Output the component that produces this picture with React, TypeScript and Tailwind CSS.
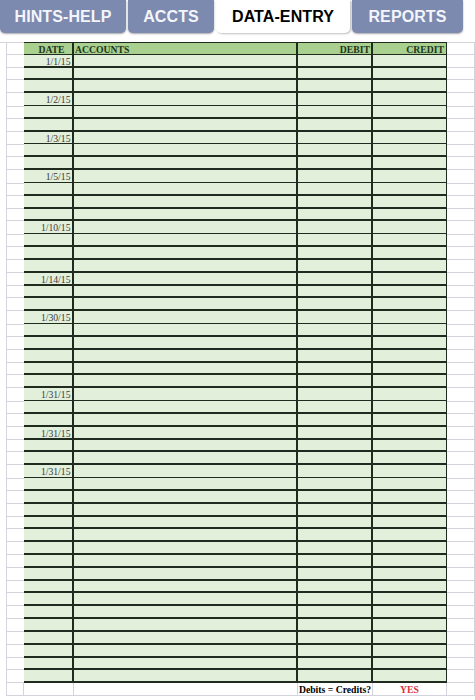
import React from "react";

const COLS = "grid grid-cols-[6px_17.5px_50px_224.5px_75px_74px_28px]";

const dates: Record<number, string> = {
  0: "1/1/15",
  3: "1/2/15",
  6: "1/3/15",
  9: "1/5/15",
  13: "1/10/15",
  17: "1/14/15",
  20: "1/30/15",
  26: "1/31/15",
  29: "1/31/15",
  32: "1/31/15",
};

const rows = Array.from({ length: 49 }, (_, i) => dates[i] ?? "");

function Tab({ label, w, active }: { label: string; w: string; active?: boolean }) {
  return (
    <div
      className={
        "h-[33px] flex items-center justify-center rounded-b-[5px] font-bold text-[16px] tracking-[0.1px] " +
        w +
        (active
          ? " bg-white text-black shadow-[1px_1px_2px_rgba(0,0,0,0.25)]"
          : " bg-[#7b8aae] text-[#f4f5fa] shadow-[0_1px_2px_rgba(0,0,0,0.35)]")
      }
      style={{ fontFamily: '"Liberation Sans", Arial, sans-serif' }}
    >
      {label}
    </div>
  );
}

export default function App() {
  return (
    <div className="w-[475px] h-[700px] bg-white overflow-hidden">
      <div className="flex gap-[2px]">
        <Tab label="HINTS-HELP" w="w-[126px]" />
        <Tab label="ACCTS" w="w-[86px]" />
        <Tab label="DATA-ENTRY" w="w-[134px]" active />
        <Tab label="REPORTS" w="w-[111px]" />
      </div>
      <div className="h-[8.5px]" />
      <div
        className="text-[9.7px] leading-none"
        style={{ fontFamily: '"Liberation Serif", "Times New Roman", serif' }}
      >
        {/* header */}
        <div className={COLS + " h-[13.2px]"}>
          <div className="border-t border-[#d4d4de]" />
          <div className="border-l border-t border-b border-[#d4d4de]" />
          <div className="bg-[#a9d08e] border-y border-r-2 border-[#1f2b1f] flex items-center justify-center font-bold text-[#1d351d] pl-[8px] pt-[2px]">
            DATE
          </div>
          <div className="bg-[#a9d08e] border-y border-r-2 border-[#1f2b1f] flex items-center font-bold text-[#1d351d] pl-[1.5px] pt-[2px]">
            ACCOUNTS
          </div>
          <div className="bg-[#a9d08e] border-y border-r-2 border-[#1f2b1f] flex items-center justify-end font-bold text-[#1d351d] pr-[1px] pt-[2px]">
            DEBIT
          </div>
          <div className="bg-[#a9d08e] border-y border-r border-[#1f2b1f] flex items-center justify-end font-bold text-[#1d351d] pr-[2px] pt-[2px]">
            CREDIT
          </div>
          <div className="border-t border-b border-r border-[#d4d4de]" />
        </div>
        {rows.map((d, i) => (
          <div key={i} className={COLS + " h-[12.84px]"}>
            <div />
            <div className="border-l border-b border-[#d4d4de]" />
            <div className="bg-[#e2efda] border-b-2 border-r-2 border-[#1f2b1f] flex items-center justify-end pr-[1px] pt-[2px] text-[#3a3a3a]">
              {d}
            </div>
            <div className="bg-[#e2efda] border-b-2 border-r-2 border-[#1f2b1f]" />
            <div className="bg-[#e2efda] border-b-2 border-r-2 border-[#1f2b1f]" />
            <div className="bg-[#e2efda] border-b-2 border-r border-[#1f2b1f]" />
            <div className="border-b border-r border-[#d4d4de]" />
          </div>
        ))}
        {/* footer */}
        <div className={COLS + " h-[12.6px]"}>
          <div />
          <div className="border-l border-b border-r border-[#d4d4de]" />
          <div className="border-b border-r border-[#d4d4de]" />
          <div className="border-b border-r border-[#d4d4de]" />
          <div className="border-b border-r border-[#d4d4de] flex items-center justify-end pr-[1px] pt-[2px] font-bold text-black">
            Debits = Credits?
          </div>
          <div className="border-b border-r border-[#d4d4de] flex items-center justify-center pt-[2px] font-bold text-[#e0303c]">
            YES
          </div>
          <div className="border-b border-r border-[#d4d4de]" />
        </div>
      </div>
    </div>
  );
}
